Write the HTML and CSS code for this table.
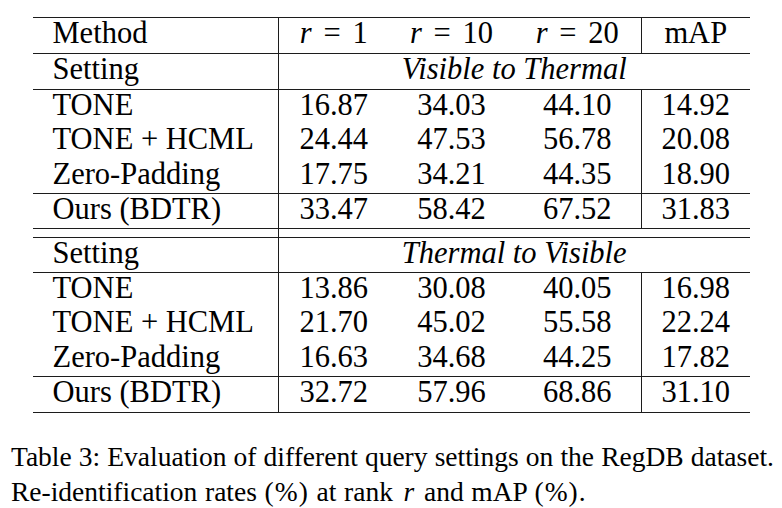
FILE: index.html
```html
<!DOCTYPE html>
<html>
<head>
<meta charset="utf-8">
<link rel="stylesheet" href="styles.css">
</head>
<body>
<div class="figure">
  <table class="results">
    <colgroup>
      <col class="c-method"><col class="c-r1"><col class="c-r10"><col class="c-r20"><col class="c-map">
    </colgroup>
    <tr class="row-head">
      <td class="method">Method</td>
      <td><span class="math"><i class="mi">r</i><span class="mo">=</span>1</span></td>
      <td><span class="math"><i class="mi">r</i><span class="mo">=</span>10</span></td>
      <td class="sep"><span class="math"><i class="mi">r</i><span class="mo">=</span>20</span></td>
      <td>mAP</td>
    </tr>
    <tr class="row-setting">
      <td class="method">Setting</td>
      <td colspan="4" class="setting-name">Visible to Thermal</td>
    </tr>
    <tr class="row-first">
      <td class="method">TONE</td><td>16.87</td><td>34.03</td><td class="sep">44.10</td><td>14.92</td>
    </tr>
    <tr class="row-data">
      <td class="method">TONE + HCML</td><td>24.44</td><td>47.53</td><td class="sep">56.78</td><td>20.08</td>
    </tr>
    <tr class="row-data">
      <td class="method">Zero-Padding</td><td>17.75</td><td>34.21</td><td class="sep">44.35</td><td>18.90</td>
    </tr>
    <tr class="row-ours">
      <td class="method">Ours (BDTR)</td><td>33.47</td><td>58.42</td><td class="sep">67.52</td><td>31.83</td>
    </tr>
    <tr class="row-gap">
      <td class="method"></td><td colspan="4"></td>
    </tr>
    <tr class="row-setting2">
      <td class="method">Setting</td>
      <td colspan="4" class="setting-name">Thermal to Visible</td>
    </tr>
    <tr class="row-first">
      <td class="method">TONE</td><td>13.86</td><td>30.08</td><td class="sep">40.05</td><td>16.98</td>
    </tr>
    <tr class="row-data">
      <td class="method">TONE + HCML</td><td>21.70</td><td>45.02</td><td class="sep">55.58</td><td>22.24</td>
    </tr>
    <tr class="row-data">
      <td class="method">Zero-Padding</td><td>16.63</td><td>34.68</td><td class="sep">44.25</td><td>17.82</td>
    </tr>
    <tr class="row-ours row-last">
      <td class="method">Ours (BDTR)</td><td>32.72</td><td>57.96</td><td class="sep">68.86</td><td>31.10</td>
    </tr>
  </table>
  <div class="caption">
    <div class="cap-line1">Table 3: Evaluation of different query settings on the RegDB dataset.</div>
    <div class="cap-line2">Re-identification rates <span class="pct">(%)</span> at rank <i class="mi cap-mi">r</i> and mAP <span class="pct">(%)</span>.</div>
  </div>
</div>
</body>
</html>
```

FILE: styles.css
```css
html, body {
  margin: 0;
  padding: 0;
  background: #ffffff;
}

body {
  font-family: "Liberation Serif", "Times New Roman", serif;
  color: #000000;
}

.figure {
  padding-top: 17px;
}

.results {
  margin-left: 33px;
  width: 717px;
  border-collapse: collapse;
  table-layout: fixed;
  font-size: 30.5px;
}

.c-method { width: 245px; }
.c-r1 { width: 111px; }
.c-r10 { width: 125px; }
.c-r20 { width: 127px; }
.c-map { width: 109px; }

.results td {
  padding: 0;
  line-height: 30px;
  vertical-align: top;
  text-align: center;
  white-space: nowrap;
}

.results td.method {
  text-align: left;
  padding-left: 19.5px;
  border-right: 1px solid #1c1c1c;
}

.results td.sep {
  border-right: 1px solid #1c1c1c;
}

.setting-name {
  font-style: italic;
}

.mi {
  font-style: italic;
}

.mo {
  display: inline-block;
  width: 0.778em;
  margin: 0 0.278em;
  text-align: center;
}

.row-head td { border-top: 1px solid #1c1c1c; }
.row-head { height: 35.5px; }

.row-setting td { border-top: 1px solid #1c1c1c; }
.row-setting { height: 36.5px; }

.row-first td { border-top: 1px solid #1c1c1c; }
.row-first, .row-data { height: 34.67px; }

.row-ours td { border-top: 1px solid #1c1c1c; }
.row-ours { height: 35.5px; }

.row-gap td {
  border-top: 1px solid #1c1c1c;
  font-size: 0;
  line-height: 0;
}
.row-gap { height: 9px; }

.row-setting2 td { border-top: 1px solid #1c1c1c; }
.row-setting2 { height: 34.5px; }

.row-last td { border-bottom: 1px solid #1c1c1c; }
.row-last { height: 36px; }

.caption {
  margin: 26px 0 0 11px;
  width: 763px;
  font-size: 27.5px;
  line-height: 35px;
}

.cap-line1 {
  text-align: justify;
  text-align-last: justify;
  word-spacing: -1px;
}

.cap-line2 {
  text-align: left;
  word-spacing: 0.8px;
}

.pct {
  letter-spacing: 1px;
}

.cap-mi {
  margin: 0 2px 0 3px;
}
```
